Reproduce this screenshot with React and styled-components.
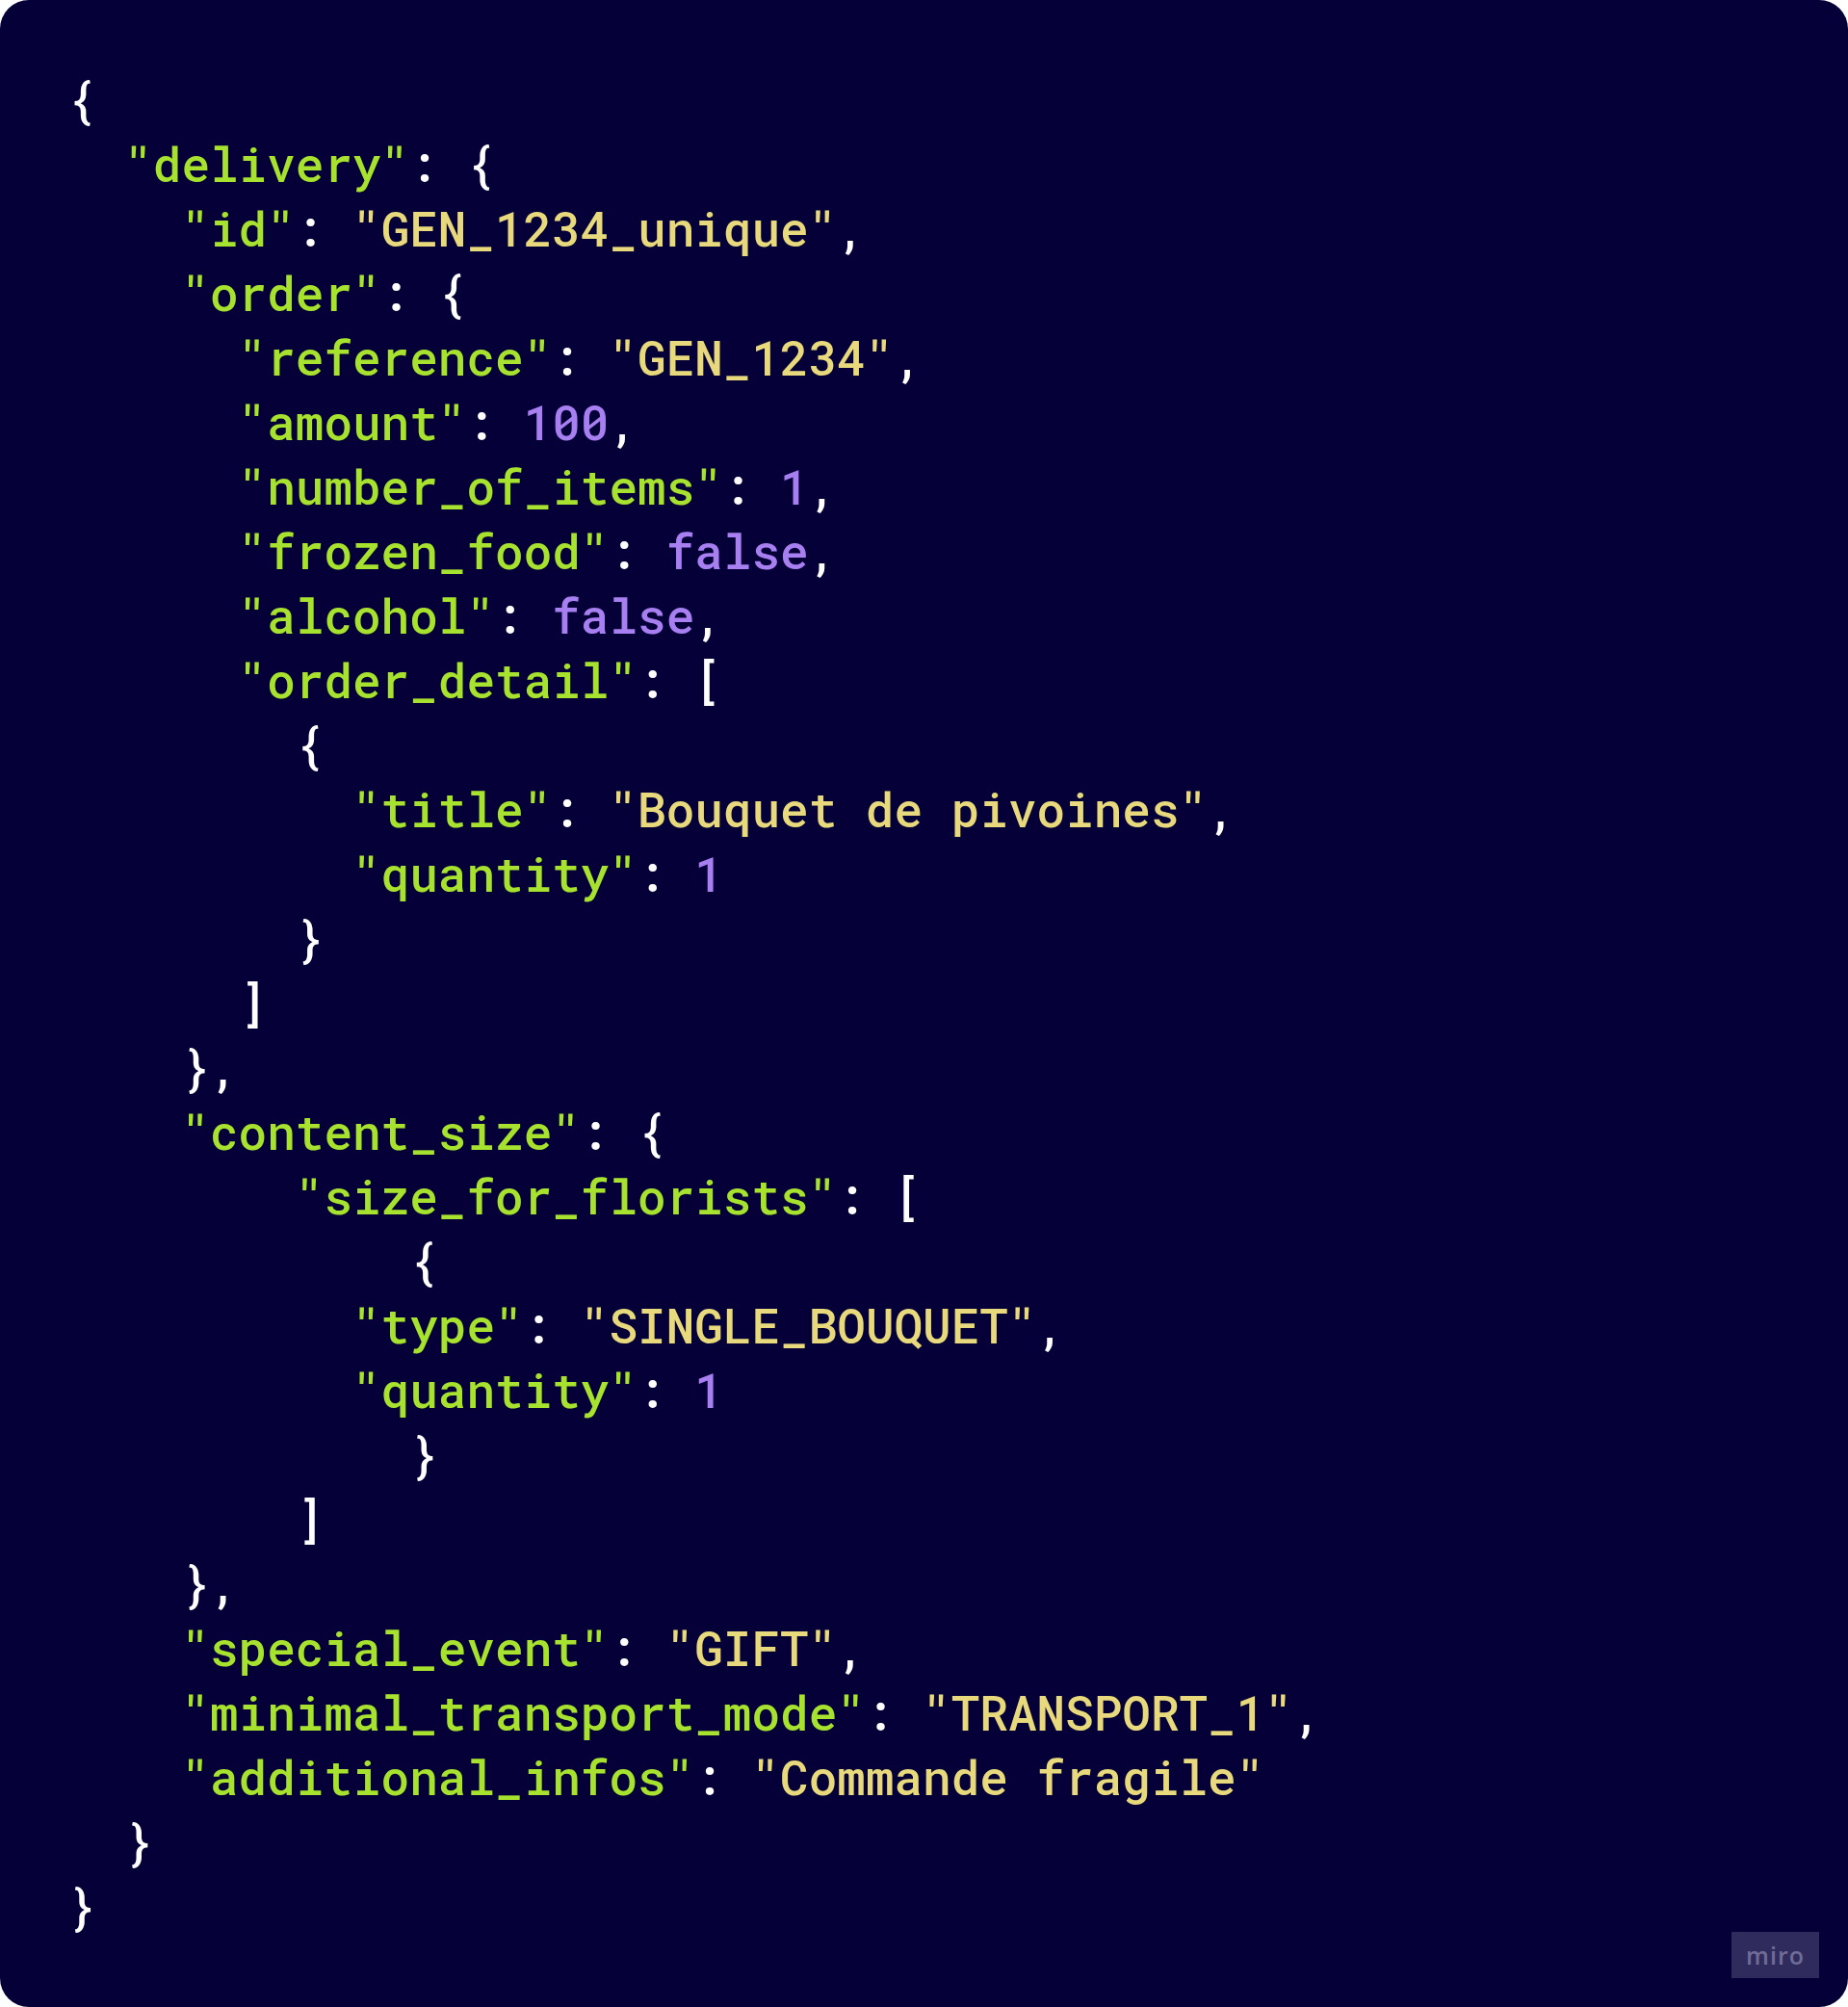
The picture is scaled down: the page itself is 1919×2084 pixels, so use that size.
import React from 'react';
import styled, { createGlobalStyle } from 'styled-components';

const GlobalStyle = createGlobalStyle`
    html, body {
        margin: 0;
        padding: 0;
        background: #ffffff;
    }
`;

// 전체 카드 (miro 보드 내보내기 배경)
const Board = styled.div`
    position: relative;
    width: 1919px;
    height: 2084px;
    box-sizing: border-box;
    padding: 69px 0 0 70px;
    background-color: #050038;
    border-radius: 30px;
    overflow: hidden;
`;

const CodeBlock = styled.div`
    font-family: "Roboto Mono", "DejaVu Sans Mono", "Liberation Mono", monospace;
    font-size: 49.33px;
    font-weight: 500;
    line-height: 67px;
    color: #ffffff;
`;

const Line = styled.div`
    white-space: pre;
    height: 67px;
    padding-left: ${(p) => p.$indent}ch;
`;

const colors = {
    key: '#a6e22e',
    str: '#e8da7c',
    num: '#a77ff0',
    punc: '#ffffff',
};

const Token = styled.span`
    color: ${(p) => colors[p.$kind]};
`;

const Badge = styled.div`
    position: absolute;
    right: 30px;
    bottom: 30px;
    width: 91px;
    height: 48px;
    display: flex;
    align-items: center;
    justify-content: center;
    background-color: #2f2b5c;
    color: #6f6c96;
    font-family: "Open Sans", "Noto Sans", sans-serif;
    font-size: 25px;
    font-weight: 600;
    letter-spacing: 1px;
`;

// [들여쓰기, [종류, 텍스트]...]
const K = (t) => ['key', `"${t}"`];
const S = (t) => ['str', `"${t}"`];
const N = (t) => ['num', t];
const P = (t) => ['punc', t];

const lines = [
    [0, P('{')],
    [2, K('delivery'), P(': {')],
    [4, K('id'), P(': '), S('GEN_1234_unique'), P(',')],
    [4, K('order'), P(': {')],
    [6, K('reference'), P(': '), S('GEN_1234'), P(',')],
    [6, K('amount'), P(': '), N('100'), P(',')],
    [6, K('number_of_items'), P(': '), N('1'), P(',')],
    [6, K('frozen_food'), P(': '), N('false'), P(',')],
    [6, K('alcohol'), P(': '), N('false'), P(',')],
    [6, K('order_detail'), P(': [')],
    [8, P('{')],
    [10, K('title'), P(': '), S('Bouquet de pivoines'), P(',')],
    [10, K('quantity'), P(': '), N('1')],
    [8, P('}')],
    [6, P(']')],
    [4, P('},')],
    [4, K('content_size'), P(': {')],
    [8, K('size_for_florists'), P(': [')],
    [12, P('{')],
    [10, K('type'), P(': '), S('SINGLE_BOUQUET'), P(',')],
    [10, K('quantity'), P(': '), N('1')],
    [12, P('}')],
    [8, P(']')],
    [4, P('},')],
    [4, K('special_event'), P(': '), S('GIFT'), P(',')],
    [4, K('minimal_transport_mode'), P(': '), S('TRANSPORT_1'), P(',')],
    [4, K('additional_infos'), P(': '), S('Commande fragile')],
    [2, P('}')],
    [0, P('}')],
];

const App = () => {
    return (
        <>
            <GlobalStyle />
            <Board>
                <CodeBlock>
                    {lines.map(([indent, ...tokens], i) => (
                        <Line key={i} $indent={indent}>
                            {tokens.map(([kind, text], j) => (
                                <Token key={j} $kind={kind}>{text}</Token>
                            ))}
                        </Line>
                    ))}
                </CodeBlock>
                <Badge>miro</Badge>
            </Board>
        </>
    );
};

export default App;
